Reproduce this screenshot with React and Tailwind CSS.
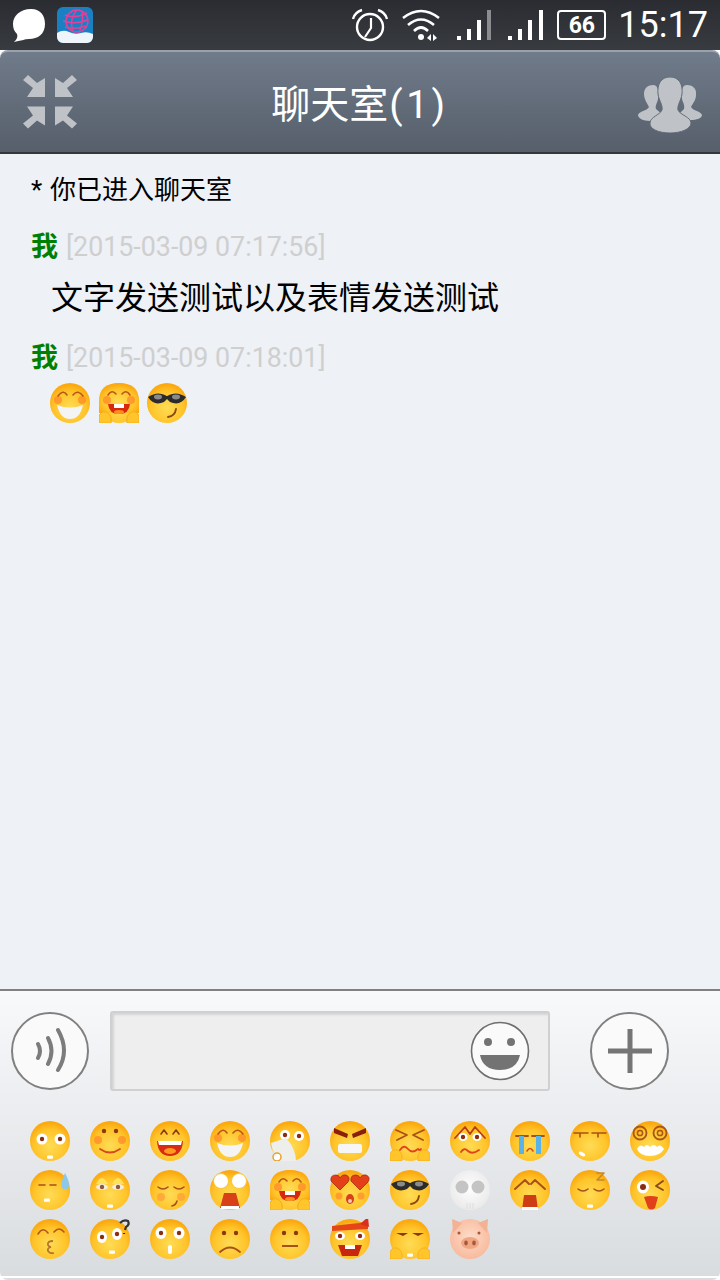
import React from "react";

const CJK = "font-['Noto_Sans_CJK_SC',sans-serif]";

// shared bits for the little smileys, all in a 40x40 box
const Dot = ({ x, y, r = 2.2, c = "#8a3a12" }) => <circle cx={x} cy={y} r={r} fill={c} />;
const Line = ({ d, c = "#b5561a", w = 1.6 }) => (
  <path d={d} fill="none" stroke={c} strokeWidth={w} strokeLinecap="round" strokeLinejoin="round" />
);
const Eye = ({ x, y, rx = 5.5, ry = 5.5, r = 2.2 }) => (
  <>
    <ellipse cx={x} cy={y} rx={rx} ry={ry} fill="#fff" />
    <circle cx={x} cy={y} r={r} fill="#8a2d10" />
  </>
);
const Cheeks = ({ y = 20 }) => (
  <>
    <circle cx="8" cy={y} r="4" fill="#ff8a2a" opacity="0.75" />
    <circle cx="32" cy={y} r="4" fill="#ff8a2a" opacity="0.75" />
  </>
);
const Small = ({ x = 20, y = 36 }) => <rect x={x - 3} y={y - 1.6} width="6" height="3.4" rx="1" fill="#fff" />;
const Hands = () => (
  <>
    <path d="M0 40 V33 Q2 28 7 29 Q12 31 12 36 V40Z" fill="#ffc52a" stroke="#f2a514" strokeWidth="0.6" />
    <path d="M40 40 V33 Q38 28 33 29 Q28 31 28 36 V40Z" fill="#ffc52a" stroke="#f2a514" strokeWidth="0.6" />
  </>
);

const faces = {
  stare: (
    <>
      <Eye x={12} y={18} />
      <Eye x={30} y={18} />
      <Small />
    </>
  ),
  blush: (
    <>
      <Cheeks y={19} />
      <Dot x={14} y={10} />
      <Dot x={26} y={10} />
      <Line d="M10 28 Q20 35 30 28" c="#d9481a" w={1.8} />
    </>
  ),
  laugh: (
    <>
      <Line d="M11 13 L14 9 L17 13 M23 13 L26 9 L29 13" c="#8a3a12" />
      <path d="M7 20 H33 Q32 35 20 35 Q8 35 7 20Z" fill="#d92a12" />
      <path d="M8 20 H32 L31 24 H9Z" fill="#fff" />
      <ellipse cx="20" cy="30" rx="6" ry="3" fill="#ff9a1e" />
    </>
  ),
  grin: (
    <>
      <Cheeks y={17} />
      <Line d="M8 13 Q13 6 17 12 M23 12 Q28 6 33 13" />
      <path d="M7 22 Q20 27 33 22 Q30 36 20 36 Q10 36 7 22Z" fill="#f4f4f4" />
    </>
  ),
  fan: (
    <>
      <Eye x={15} y={14} rx={5} ry={5} />
      <Eye x={29} y={15} rx={5} ry={5} />
      <path d="M1 22 L16 17 Q26 28 26 40 H10 Q3 34 1 22Z" fill="#eeeeea" />
      <circle cx="7" cy="36" r="4" fill="#fff" stroke="#e8a22a" strokeWidth="1.5" />
    </>
  ),
  angry: (
    <>
      <path d="M4 7 L18 13 L17 17 L4 12Z M36 7 L22 13 L23 17 L36 12Z" fill="#8a1f0c" />
      <rect x="8" y="23" width="24" height="9" rx="2" fill="#f6f6f6" />
    </>
  ),
  squint: (
    <>
      <Line d="M6 9 L17 14 L7 19 M34 9 L23 14 L33 19" c="#a8501a" w={1.8} />
      <Line d="M10 29 Q14 23 18 28 T28 28 Q30 30 31 28" c="#e0441a" w={1.8} />
      <Hands />
    </>
  ),
  worried: (
    <>
      <Line d="M5 17 L15 6 L20 13 M35 17 L25 6 L20 13" c="#b93a1a" w={1.8} />
      <Eye x={13} y={16} rx={4.5} ry={4} />
      <Eye x={27} y={16} rx={4.5} ry={4} />
      <Line d="M11 31 Q14 26 18 30 T29 29" c="#e0441a" w={1.8} />
    </>
  ),
  cry: (
    <>
      <Line d="M6 15 H18 M22 15 H34" c="#a8501a" w={1.8} />
      <rect x="9" y="15" width="5" height="18" fill="#58b4e8" />
      <rect x="26" y="15" width="5" height="18" fill="#58b4e8" />
      <Line d="M17 30 Q20 25 23 30" c="#d9481a" />
    </>
  ),
  flat: (
    <>
      <Line d="M4 12 H18 M22 12 H36 M10 12 V16 M28 12 V16" c="#a8501a" />
      <ellipse cx="12" cy="33" rx="3.5" ry="1.8" fill="#fff" transform="rotate(30 12 33)" />
    </>
  ),
  dizzy: (
    <>
      <circle cx="10" cy="12" r="6.5" fill="none" stroke="#a8561a" strokeWidth="1.8" />
      <circle cx="10" cy="12" r="2.6" fill="none" stroke="#a8561a" strokeWidth="1.5" />
      <circle cx="30" cy="12" r="6.5" fill="none" stroke="#a8561a" strokeWidth="1.8" />
      <circle cx="30" cy="12" r="2.6" fill="none" stroke="#a8561a" strokeWidth="1.5" />
      <path d="M7 28 Q10 22 14 26 Q17 22 20 26 Q24 22 27 26 Q30 22 34 28 Q30 35 20 35 Q10 35 7 28Z" fill="#fff" />
    </>
  ),
  sweat: (
    <>
      <Line d="M9 15 H15 M20 15 H26" c="#a8501a" />
      <path d="M35 3 Q41 14 38 18 Q35 21 32 18 Q30 14 35 3Z" fill="#8cc8ea" />
      <Small x={17} y={30} />
    </>
  ),
  lids: (
    <>
      <path d="M6 14 Q12 2 18 14Z M22 14 Q28 2 34 14Z" fill="#ffe25a" />
      <ellipse cx="12" cy="17" rx="6" ry="3" fill="#f4ece0" />
      <ellipse cx="28" cy="17" rx="6" ry="3" fill="#f4ece0" />
      <Dot x={12} y={17} c="#8a5a3a" />
      <Dot x={28} y={17} c="#8a5a3a" />
      <Small />
    </>
  ),
  shy: (
    <>
      <Line d="M8 17 Q13 21 18 17 M24 17 Q29 21 34 17" c="#a8501a" />
      <circle cx="11" cy="27" r="4" fill="#ff9a3a" opacity="0.7" />
      <circle cx="31" cy="27" r="4" fill="#ff9a3a" opacity="0.7" />
      <Line d="M27 31 Q26 35 22 36" c="#a8501a" />
    </>
  ),
  shock: (
    <>
      <circle cx="11" cy="11" r="7.5" fill="#fff" stroke="#f9c53a" />
      <circle cx="29" cy="11" r="7.5" fill="#fff" stroke="#f9c53a" />
      <path d="M14 23 H26 L30 38 H10Z" fill="#d8401a" />
      <rect x="11" y="36" width="18" height="3" fill="#fff" />
    </>
  ),
  hug: (
    <>
      <Hands />
      <path d="M0 18 Q0 0 20 0 Q40 0 40 18 V30 H0Z" fill="url(#ballYellow)" />
      <Cheeks y={17} />
      <Line d="M9 12 Q13 6 17 11 M23 11 Q27 6 31 12" />
      <path d="M9 21 H31 Q30 31 20 31 Q10 31 9 21Z" fill="#d8290f" />
      <rect x="15" y="21" width="10" height="4" fill="#fff" />
      <ellipse cx="20" cy="29" rx="5" ry="2" fill="#ff8c1e" />
      <Hands />
    </>
  ),
  hearts: (
    <>
      <path d="M10 20 L1 11 Q0 5 6 5 Q9 5 10 8 Q12 4 16 5 Q21 7 18 12Z" fill="#e3401a" stroke="#a32b0d" strokeWidth="0.8" />
      <path d="M30 20 L21 11 Q20 5 26 5 Q29 5 30 8 Q32 4 36 5 Q41 7 38 12Z" fill="#e3401a" stroke="#a32b0d" strokeWidth="0.8" />
      <circle cx="9" cy="26" r="3.5" fill="#ff8a2a" opacity="0.7" />
      <circle cx="31" cy="26" r="3.5" fill="#ff8a2a" opacity="0.7" />
      <ellipse cx="20" cy="29" rx="4" ry="5" fill="#d8401a" />
      <ellipse cx="20" cy="31" rx="2" ry="2" fill="#fff" opacity="0.7" />
    </>
  ),
  shades: (
    <>
      <path d="M1 14 Q10 8 18 12 Q20 14 22 12 Q30 8 39 14 Q34 22 26 20 Q22 19 20 16 Q18 19 14 20 Q6 22 1 14Z" fill="#2b2b2b" />
      <ellipse cx="11" cy="14" rx="4" ry="2.4" fill="#8a8a8a" />
      <ellipse cx="29" cy="14" rx="4" ry="2.4" fill="#8a8a8a" />
      <Line d="M29 26 Q28 33 21 34" c="#8a4a12" w={1.8} />
    </>
  ),
  pigFace: (
    <>
      <ellipse cx="20" cy="24" rx="9" ry="6" fill="#f0a583" />
      <ellipse cx="16" cy="24" rx="1.8" ry="2.4" fill="#a35a3a" />
      <ellipse cx="24" cy="24" rx="1.8" ry="2.4" fill="#a35a3a" />
      <Dot x={9} y={14} r={1.5} c="#a35a3a" />
      <Dot x={29} y={14} r={1.5} c="#a35a3a" />
    </>
  ),
  skull: (
    <>
      <circle cx="12" cy="17" r="6.5" fill="#c4c4c4" />
      <circle cx="28" cy="17" r="6.5" fill="#c4c4c4" />
      <path d="M17 33 V39 M20 33 V39 M23 33 V39" stroke="#ddd" strokeWidth="1" />
    </>
  ),
  wail: (
    <>
      <Line d="M5 19 L15 10 L19 14 M35 19 L25 10 L21 14" c="#a8501a" w={2} />
      <path d="M14 25 H26 L28 40 H12Z" fill="#cf3d16" />
      <rect x="12" y="37" width="16" height="3" fill="#fff" />
    </>
  ),
  sleep: (
    <>
      <Line d="M8 19 Q13 23 18 19 M24 19 Q29 23 34 19" c="#a8501a" />
      <Line d="M27 3 H34 L27 10 H34" c="#c4892a" />
      <Small x={20} y={36} />
    </>
  ),
  tongue: (
    <>
      <Eye x={13} y={17} rx={6} ry={6.5} r={3} />
      <Line d="M33 11 L26 16 L33 20" c="#8a4a1a" w={1.8} />
      <path d="M14 27 Q20 25 28 27 L25 38 Q21 41 18 38Z" fill="#e0401a" />
    </>
  ),
  kiss: (
    <>
      <Line d="M8 15 Q13 7 18 14 M24 13 Q29 7 34 13" />
      <path d="M23 22 Q17 22 18 26 Q19 28 21 28 Q17 29 18 32 Q20 35 24 34" fill="none" stroke="#b5762a" strokeWidth="1.8" />
    </>
  ),
  puzzled: (
    <>
      <Eye x={12} y={18} rx={5} ry={6} />
      <Eye x={27} y={15} rx={5} ry={6} />
      <path d="M30 4 Q34 0 38 2 Q40 6 36 8 L35 11 M34 14 V15" fill="none" stroke="#333" strokeWidth="2.2" />
      <Small x={22} y={33} />
    </>
  ),
  oh: (
    <>
      <Eye x={11} y={14} rx={5.5} ry={6} />
      <Eye x={29} y={14} rx={5.5} ry={6} />
      <rect x="18" y="26" width="4" height="9" rx="2" fill="#fff" />
    </>
  ),
  sad: (
    <>
      <Dot x={14} y={14} />
      <Dot x={26} y={14} />
      <Line d="M10 33 Q20 24 30 33" c="#a8501a" w={1.8} />
    </>
  ),
  plain: (
    <>
      <Dot x={14} y={14} />
      <Dot x={26} y={14} />
      <path d="M12 27 H28" stroke="#a8501a" strokeWidth="2" />
    </>
  ),
  rage: (
    <>
      <path d="M2 7 L38 3 L38 10 L2 12Z" fill="#e4461a" />
      <path d="M30 5 L38 -2 L39 8Z" fill="#d8301a" />
      <Eye x={10} y={17} rx={5} ry={4} />
      <Eye x={30} y={17} rx={5} ry={4} />
      <path d="M8 26 H32 L28 37 H12Z" fill="#c9260e" />
      <rect x="15" y="26" width="10" height="4" fill="#fff" />
    </>
  ),
  smug: (
    <>
      <path d="M6 14 H18 L13 17Z M22 14 H34 L28 17Z" fill="#8a3a12" />
      <Hands />
      <Small />
    </>
  ),
};

const rows = [
  ["stare", "blush", "laugh", "grin", "fan", "angry", "squint", "worried", "cry", "flat", "dizzy"],
  ["sweat", "lids", "shy", "shock", "hug", "hearts", "shades", "skull", "wail", "sleep", "tongue"],
  ["kiss", "puzzled", "oh", "sad", "plain", "rage", "smug", "pig"],
];

function Face({ name }) {
  const fill = name === "skull" ? "url(#ballWhite)" : name === "pig" ? "url(#ballPig)" : "url(#ballYellow)";
  return (
    <svg viewBox="0 0 40 40" className="w-10 h-10 block shrink-0 blur-[0.35px]">
      <circle cx="20" cy="20" r="20" fill={fill} />
      {name === "pig" ? (
        <>
          <path d="M2 0 L12 4 L3 14Z M38 0 L28 4 L37 14Z" fill="#f4b295" />
          {faces.pigFace}
        </>
      ) : (
        faces[name]
      )}
    </svg>
  );
}

function StatusBar() {
  return (
    <div className="h-[50px] shrink-0 flex items-center bg-gradient-to-b from-[#2a2c31] to-[#383b3f] text-white">
      {/* qq bubble */}
      <svg viewBox="0 0 36 36" className="w-9 h-9 ml-[11px]">
        <path d="M20 2 C30 2 34 9 34 17 C34 27 27 32 18 32 C14 32 9 34 3 35 C6 32 7 30 6 27 C3 24 2 21 2 17 C2 9 9 2 20 2Z" fill="#fff" />
      </svg>
      {/* globe app */}
      <svg viewBox="0 0 36 36" className="w-9 h-9 ml-[10px]">
        <rect width="36" height="36" rx="6" fill="#1a80c4" />
        <circle cx="20" cy="14" r="11" fill="none" stroke="#e2409a" strokeWidth="1.4" />
        <path d="M8 8 Q18 12 30 6 M6 14 Q18 18 31 13 M8 20 Q18 23 29 19 M20 3 Q11 13 17 26 M25 4 Q27 14 22 26" fill="none" stroke="#e2409a" strokeWidth="1.4" />
        <path d="M0 26 Q6 22 12 25 Q18 28 24 26 Q30 24 36 27 V30 A6 6 0 0 1 30 36 H6 A6 6 0 0 1 0 30Z" fill="#eef6fb" />
      </svg>

      <div className="ml-auto flex items-center">
        {/* alarm */}
        <svg viewBox="0 0 38 36" className="w-[38px] h-9">
          <circle cx="19" cy="20" r="13" fill="none" stroke="#fff" strokeWidth="2.4" />
          <path d="M20 11 V21 L14 30" fill="none" stroke="#fff" strokeWidth="2.2" />
          <path d="M2 12 Q4 5 11 3 M36 12 Q34 5 27 3" fill="none" stroke="#fff" strokeWidth="2.4" />
        </svg>
        {/* wifi */}
        <svg viewBox="0 0 38 34" className="w-[38px] h-[34px] ml-[13px]">
          <path d="M1 10 Q19 -4 37 10 M6 17 Q19 6 32 17 M12 23 Q19 16 26 23" fill="none" stroke="#fff" strokeWidth="2.6" />
          <circle cx="19" cy="29" r="3" fill="#fff" />
          <path d="M25 30 L29 26 V33Z M31 26 L35 30 L31 33Z" fill="#fff" />
        </svg>
        {/* sim 1 */}
        <svg viewBox="0 0 34 32" className="w-[34px] h-8 ml-[17px]">
          <rect x="0" y="27" width="4" height="4" fill="#fff" />
          <rect x="10" y="20" width="4" height="11" fill="#fff" />
          <rect x="20" y="11" width="4" height="20" fill="#fff" />
          <rect x="30" y="1" width="4" height="30" fill="#8a8c8f" />
        </svg>
        {/* sim 2 */}
        <svg viewBox="0 0 36 32" className="w-[36px] h-8 ml-[17px]">
          <rect x="0" y="27" width="4" height="4" fill="#fff" />
          <rect x="10" y="20" width="4" height="11" fill="#fff" />
          <rect x="20" y="11" width="4" height="20" fill="#fff" />
          <rect x="31" y="1" width="4" height="30" fill="#fff" />
        </svg>
        {/* battery */}
        <div className="ml-[13px] relative w-[49px] h-[30px] border-2 border-white rounded-[4px] flex items-center justify-center font-['Roboto',sans-serif] font-bold text-[23px] leading-none">
          66
        </div>
        <div className="ml-[12px] mr-[12px] font-['Roboto',sans-serif] text-[36px] leading-none">15:17</div>
      </div>
    </div>
  );
}

function Header() {
  return (
    <div className="h-[104px] shrink-0 flex items-center justify-between pl-[23px] pr-[18px] rounded-t-[8px] border-t-2 border-b-2 border-t-[#9aa1ab] border-b-[#34373b] bg-gradient-to-b from-[#707b8b] to-[#565f6a]">
      <svg viewBox="0 0 54 54" className="w-[54px] h-[54px]">
        <g fill="#bfc3c8">
          <path d="M0 5 L5 0 L14 8 L22 3 V22 H4 L10 13Z" />
          <path d="M0 5 L5 0 L14 8 L22 3 V22 H4 L10 13Z" transform="translate(54 0) scale(-1 1)" />
          <path d="M0 5 L5 0 L14 8 L22 3 V22 H4 L10 13Z" transform="translate(0 53.5) scale(1 -1)" />
          <path d="M0 5 L5 0 L14 8 L22 3 V22 H4 L10 13Z" transform="translate(54 53.5) scale(-1 -1)" />
        </g>
      </svg>
      <div className={`${CJK} ml-[5px] text-white text-[39px] leading-none pt-[2px]`}>
        聊天室<span className="font-['Roboto',sans-serif] font-normal tracking-[3.5px] ml-[1px]">(1)</span>
      </div>
      <svg viewBox="0 0 64 56" className="w-16 h-14 mt-[6px]">
        <g fill="#bfc3c8">
          <path d="M15 8 C20 8 21 14 20 22 C19 27 17 28 18 32 L25 38 C22 42 18 44 12 44 C5 44 0 41 0 38 C1 34 9 34 11 30 C9 26 6 22 6 17 C6 11 10 8 15 8Z" />
          <path d="M49 8 C54 8 59 11 58 18 C58 23 55 26 53 30 C55 34 63 34 64 38 C64 41 59 43 52 43 C48 43 44 41 40 38 L46 32 C47 28 45 26 44 22 C43 14 44 8 49 8Z" />
          <path d="M32 0 C41 0 45 7 44 17 C43 24 39 28 40 33 C42 38 53 40 53 46 C53 52 43 56 32 56 C21 56 11 52 12 46 C12 40 22 38 24 33 C25 28 21 24 20 17 C19 7 23 0 32 0Z" stroke="#626b77" strokeWidth="1" />
        </g>
      </svg>
    </div>
  );
}

function Stamp({ time }) {
  return (
    <div className="flex items-center h-[34px]">
      <span className={`${CJK} text-[27px] leading-none font-bold text-[#008000]`}>我</span>
      <span className="ml-[8px] pt-[6px] font-['Roboto',sans-serif] text-[26.8px] leading-none text-[#cfcfcf]">[{time}]</span>
    </div>
  );
}

export default function App() {
  return (
    <div className="w-[720px] h-[1280px] flex flex-col overflow-hidden bg-white">
      <svg className="absolute w-0 h-0">
        <defs>
          <radialGradient id="ballYellow" cx="50%" cy="62%" r="58%">
            <stop offset="0%" stopColor="#ffdc55" />
            <stop offset="70%" stopColor="#ffc42a" />
            <stop offset="100%" stopColor="#fba90f" />
          </radialGradient>
          <radialGradient id="ballWhite" cx="50%" cy="45%" r="60%">
            <stop offset="0%" stopColor="#ffffff" />
            <stop offset="100%" stopColor="#e8e8e8" />
          </radialGradient>
          <radialGradient id="ballPig" cx="50%" cy="45%" r="60%">
            <stop offset="0%" stopColor="#fddcc8" />
            <stop offset="100%" stopColor="#f8b79a" />
          </radialGradient>
        </defs>
      </svg>

      <StatusBar />
      <Header />

      {/* messages */}
      <div className="flex-1 bg-[#eef1f6] pl-[31px] pt-[15px]">
        <div className={`${CJK} text-[26px] leading-[38px] text-black`}>
          <span className="font-['Roboto',sans-serif] mr-[2px]">*</span> 你已进入聊天室
        </div>
        <div className="mt-[18px]">
          <Stamp time="2015-03-09 07:17:56" />
        </div>
        <div className={`${CJK} ml-[20px] mt-[11px] text-[32px] leading-[46px] text-black`}>文字发送测试以及表情发送测试</div>
        <div className="mt-[20px]">
          <Stamp time="2015-03-09 07:18:01" />
        </div>
        <div className="ml-[19px] mt-[11px] flex gap-[8.5px]">
          <Face name="grin" />
          <Face name="hug" />
          <Face name="shades" />
        </div>
      </div>

      {/* bottom panel */}
      <div className="h-[291px] shrink-0 rounded-b-[8px] border-t-2 border-t-[#808080] bg-gradient-to-b from-[#f8f9fb] to-[#d9dcdf]">
        <div className="flex items-center pl-[11px] pt-[20px]">
          <button className="w-[78px] h-[78px] rounded-full border-2 border-[#808080] bg-[#fafafa] flex items-center justify-center">
            <svg viewBox="0 0 40 48" className="w-[40px] h-[48px]">
              <path d="M8 17 Q12 24 8 31 M18 11 Q25 24 18 37 M28 3 Q40 24 28 43" fill="none" stroke="#7c7c7c" strokeWidth="4" strokeLinecap="round" />
            </svg>
          </button>
          <div className="relative ml-[21px] w-[440px] h-[80px] rounded-[3px] border-2 border-[#d0d0d0] bg-[#eeeeee] shadow-[inset_2px_2px_2px_#d4d4d4]">
            <svg viewBox="0 0 60 60" className="absolute right-[18px] top-[8px] w-[60px] h-[60px]">
              <circle cx="30" cy="30" r="28.5" fill="#fafafa" stroke="#6e6e6e" strokeWidth="1.6" />
              <circle cx="18" cy="21" r="4" fill="#737373" />
              <circle cx="41" cy="21" r="4" fill="#737373" />
              <path d="M10 34 H50 Q47 49 30 49 Q13 49 10 34Z" fill="#737373" />
            </svg>
          </div>
          <button className="ml-[40px] w-[79px] h-[78px] rounded-full border-2 border-[#808080] bg-[#fafafa] flex items-center justify-center">
            <svg viewBox="0 0 44 44" className="w-[44px] h-[44px]">
              <path d="M22 0 V44 M0 22 H44" stroke="#757575" strokeWidth="5" />
            </svg>
          </button>
        </div>

        <div className="mt-[30px] pl-[30px] flex flex-col gap-[9px]">
          {rows.map((row) => (
            <div key={row[0]} className="flex gap-[20px]">
              {row.map((name) => (
                <Face key={name} name={name} />
              ))}
            </div>
          ))}
        </div>
        <div className="mt-[17px] h-[2px] bg-white" />
      </div>
    </div>
  );
}
